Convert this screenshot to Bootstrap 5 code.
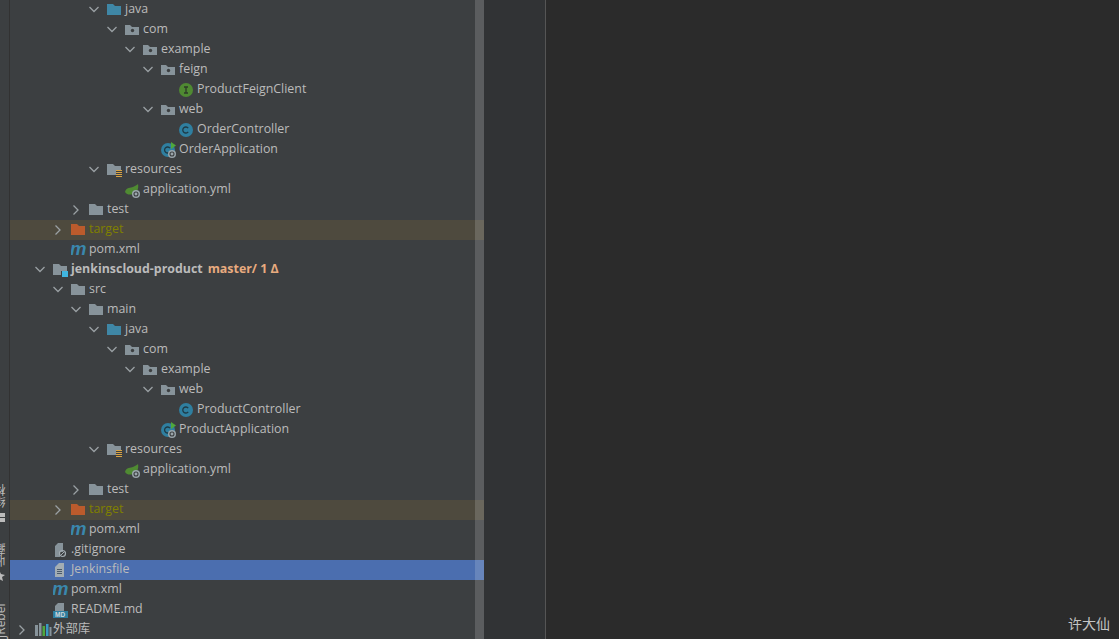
<!DOCTYPE html>
<html lang="zh">
<head>
<meta charset="utf-8">
<link href="https://cdn.jsdelivr.net/npm/bootstrap@5.3.0/dist/css/bootstrap.min.css" rel="stylesheet">
<style>
html,body{height:100%;overflow:hidden;background:#2b2b2b}
body{font-family:"Open Sans","Noto Sans CJK SC",sans-serif;font-size:12.4px;color:#bbb}
.ide{height:639px}
.strip{width:10px;height:639px;background:#3c3f41;border-right:1px solid #323232;overflow:hidden;color:#bbb;font-size:12px;flex:none}
.striptab{writing-mode:vertical-rl;transform:rotate(180deg);white-space:nowrap;margin-left:-5px;line-height:12px;width:12px;flex:none;font-family:"Open Sans","Noto Sans CJK SC",sans-serif}
.tab1{height:24px;margin-top:484px}
.ic1{margin-top:5px;flex:none}
.tab2{height:25px;margin-top:20px}
.ic2{margin-top:3px;flex:none}
.tab3{height:39px;margin-top:18px}
.tree{width:474px;background:#3c3f41;overflow:hidden;flex:none}
.sbar{position:absolute;top:0;bottom:0;right:0;width:9px;background:rgba(255,255,255,.16)}
.trow{height:20px;line-height:18px;white-space:nowrap}
.trow.ign{background:#4e4a3e}
.trow.sel{background:#4b6eaf}
.chev{width:18px;flex:none}
.ico{width:18px;flex:none}
.d-1{padding-left:7px}.d0{padding-left:25px}.d1{padding-left:43px}.d2{padding-left:61px}.d3{padding-left:79px}.d4{padding-left:97px}.d5{padding-left:115px}.d6{padding-left:133px}.d7{padding-left:151px}
.d0{padding-left:25px}
.tgt{color:#808000}
.gitt{color:#e8ab7f;font-weight:700;margin-left:5px}
.gut{width:62px;background:#313335;border-right:1px solid #555;flex:none}
.edit{background:#2b2b2b}
.author{position:absolute;right:9px;bottom:9px;font-size:14px;color:#c4c4c4;font-family:"Noto Sans CJK SC",sans-serif;line-height:1}
svg{display:block}
</style>
</head>
<body>
<svg width="0" height="0" class="position-absolute">
<defs>
<symbol id="cd" viewBox="0 0 18 20"><path d="M.5 7l4.5 4.5L9.500 7" fill="none" stroke="#9aa0a4" stroke-width="1.3"/></symbol>
<symbol id="cr" viewBox="0 0 18 20"><path d="M2.500 5.500l4.500 4.500-4.500 4.500" fill="none" stroke="#9aa0a4" stroke-width="1.3"/></symbol>
<symbol id="folder" viewBox="0 0 18 20"><path d="M0 4h6l2 2h6v9H0z" fill="#87939a"/></symbol>
<symbol id="srcf" viewBox="0 0 18 20"><path d="M0 4h6l2 2h6v9H0z" fill="#3f87a6"/></symbol>
<symbol id="pkg" viewBox="0 0 18 20"><path d="M0 5h5l2 2h7v8H0z" fill="#87939a"/><circle cx="7.500" cy="10.500" r="1.700" fill="#3c3f41"/></symbol>
<symbol id="targ" viewBox="0 0 18 20"><path d="M0 4h6l2 2h6v9H0z" fill="#bc5b2c"/></symbol>
<symbol id="res" viewBox="0 0 18 20"><path d="M0 4h6l2 2h6v4H9v5H0z" fill="#87939a"/><path d="M9 10.500h6M9 12.500h6M9 14.500h6M9 16.500h6" stroke="#d9a343"/></symbol>
<symbol id="mod" viewBox="0 0 18 20"><path d="M0 4h6l2 2h6v5H8v4H0z" fill="#87939a"/><rect x="9" y="11" width="6" height="6" fill="#40b6e0"/></symbol>
<symbol id="ci" viewBox="0 0 18 20"><circle cx="7" cy="10" r="7" fill="#4f8a32"/><path d="M5 7h4M5 13h4M7 7v6" stroke="#2d3a28" stroke-width="1.300" fill="none"/></symbol>
<symbol id="cc" viewBox="0 0 18 20"><circle cx="7" cy="10" r="7" fill="#2f7fa0"/><path d="M9.200 8.200a3 3 0 1 0 0 3.600" stroke="#1f3a45" stroke-width="1.300" fill="none"/></symbol>
<symbol id="app" viewBox="0 0 18 20"><circle cx="7" cy="10" r="7" fill="#2f7fa0"/><path d="M9 8.200a3 3 0 1 0 0 3.600" stroke="#1f3a45" stroke-width="1.300" fill="none"/><path d="M10 2l5 3.500-5 3.500z" fill="#4fa83d"/><circle cx="11" cy="14" r="4" fill="#9aa5ab"/><circle cx="11" cy="14" r="2" fill="none" stroke="#3c3f41" stroke-width="1.100"/></symbol>
<symbol id="yml" viewBox="0 0 18 20"><path d="M0 12c1-5 6-4 8-5 2-1 4-2 5-3 1 5-1 9-5 10-3 1-6 1-8-2z" fill="#4f8a32"/><circle cx="11" cy="14" r="4" fill="#9aa5ab"/><circle cx="11" cy="14" r="2" fill="none" stroke="#3c3f41" stroke-width="1.100"/></symbol>
<symbol id="m" viewBox="0 0 18 20"><text x="-1" y="15" font-family="Liberation Sans" font-style="italic" font-weight="700" font-size="18.500" fill="#3a87ad">m</text></symbol>
<symbol id="git" viewBox="0 0 18 20"><path d="M2 6l3-3h5v9H7v5H2z" fill="#87939a"/><circle cx="9.500" cy="13.500" r="3" fill="none" stroke="#a3adb3" stroke-width="1.200"/><path d="M7.500 15.500l4-4" stroke="#a3adb3"/></symbol>
<symbol id="file" viewBox="0 0 18 20"><path d="M2 7l4-4h5v14H2z" fill="#a3adb3"/><path d="M4 9.500h5M4 11.500h5M4 13.500h5" stroke="#4b5a6a"/></symbol>
<symbol id="md" viewBox="0 0 18 20"><path d="M2 6l3-3h6v8H2z" fill="#87939a"/><rect y="11" width="15" height="7" fill="#2f7fa0"/><text x="2" y="17" font-family="Liberation Sans" font-weight="700" font-size="6.500" fill="#cfd8dc">MD</text></symbol>
<symbol id="lib" viewBox="0 0 18 20"><rect x="0" y="5" width="3" height="11" fill="#87939a"/><rect x="4" y="3" width="2.500" height="13" fill="#87939a"/><rect x="7.500" y="6" width="2.500" height="10" fill="#4fa83d"/><rect x="11" y="4" width="2.500" height="12" fill="#3a9ac4"/><rect x="14.500" y="7" width="2" height="9" fill="#87939a"/></symbol>
</defs>
</svg>
<div class="ide d-flex position-relative">
  <div class="strip d-flex flex-column">
    <div class="striptab tab1">结构</div>
    <svg class="ic1" width="9" height="9" viewBox="0 0 9 9"><path d="M0 0h5v4H0zM0 5h5v4H0z" fill="#bbb"/></svg>
    <div class="striptab tab2">收藏</div>
    <svg class="ic2" width="9" height="11" viewBox="0 0 9 11"><path d="M-1 0l2 4 4 1-3 2 1 4-4-2-4 2 1-4-3-2 4-1z" fill="#bbb"/></svg>
    <div class="striptab tab3">JRebel</div>
  </div>
  <div class="tree position-relative" id="tree"></div>
  <div class="gut"></div>
  <div class="edit flex-grow-1"></div>
  <div class="author">许大仙</div>
</div>
<script>
var rows=[[3,'d','srcf','java'],[4,'d','pkg','com'],[5,'d','pkg','example'],[6,'d','pkg','feign'],[7,'','ci','ProductFeignClient'],[6,'d','pkg','web'],[7,'','cc','OrderController'],[6,'','app','OrderApplication'],[3,'d','res','resources'],[4,'','yml','application.yml'],[2,'r','folder','test'],[1,'r','targ','target','ign'],[1,'','m','pom.xml'],[0,'d','mod','<b>jenkinscloud-product</b><span class="gitt">master/ 1 Δ</span>'],[1,'d','folder','src'],[2,'d','folder','main'],[3,'d','srcf','java'],[4,'d','pkg','com'],[5,'d','pkg','example'],[6,'d','pkg','web'],[7,'','cc','ProductController'],[6,'','app','ProductApplication'],[3,'d','res','resources'],[4,'','yml','application.yml'],[2,'r','folder','test'],[1,'r','targ','target','ign'],[1,'','m','pom.xml'],[0,'','git','.gitignore'],[0,'','file','Jenkinsfile','sel'],[0,'','m','pom.xml'],[0,'','md','README.md'],[-1,'r','lib','外部库']];
var h='';
rows.forEach(function(r){
 var cls=r[4]||'';
 var t=r[4]==='ign'?' tgt':'';
 h+='<div class="trow d-flex '+cls+' d'+r[0]+'"><span class="chev">'+(r[1]?'<svg width="18" height="20"><use href="#c'+r[1]+'"/></svg>':'')+'</span><span class="ico"><svg width="18" height="20"><use href="#'+r[2]+'"/></svg></span><span class="'+t+'">'+r[3]+'</span></div>';
});
h+='<div class="sbar"></div>';
document.getElementById('tree').innerHTML=h;
</script>
<script src="https://cdn.jsdelivr.net/npm/bootstrap@5.3.0/dist/js/bootstrap.bundle.min.js"></script>
</body>
</html>
